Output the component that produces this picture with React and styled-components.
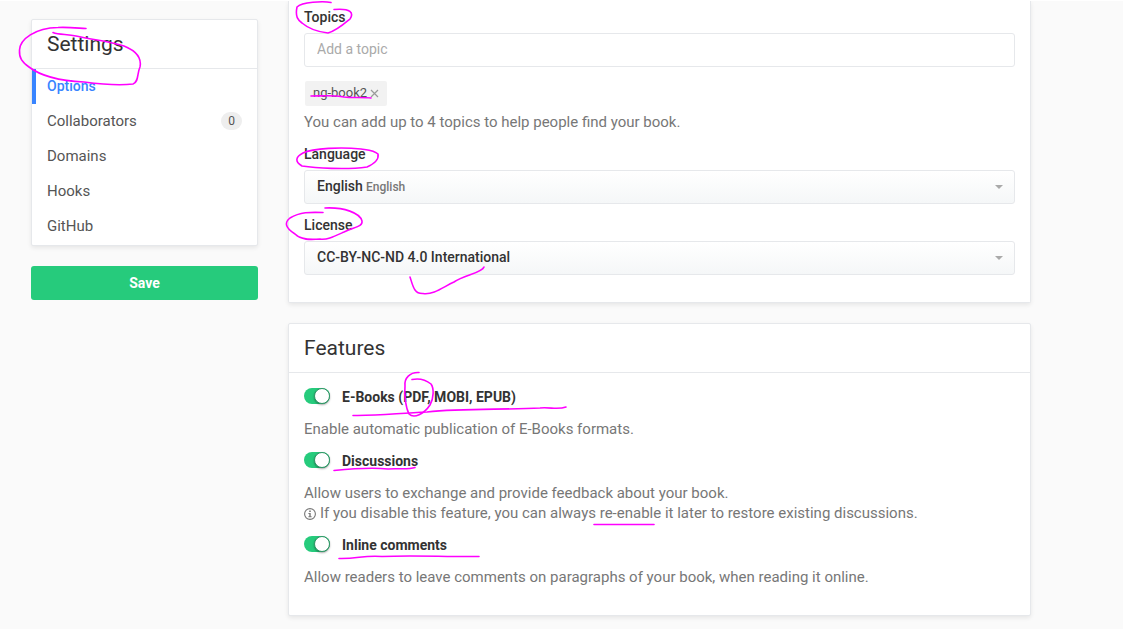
import React from "react";
import styled, { createGlobalStyle } from "styled-components";

const GlobalStyle = createGlobalStyle`
  *, *::before, *::after { box-sizing: border-box; }
  body {
    margin: 0;
    background: #fafafa;
    color: #333;
    font-family: Roboto, "Liberation Sans", sans-serif;
    font-size: 14px;
    line-height: 20px;
  }
`;

const Page = styled.div`
  position: relative;
  min-height: 100vh;
  overflow: hidden;
  border-top: 1px solid #fff;
`;

const Layout = styled.div`
  display: grid;
  grid-template-columns: 227px minmax(0, 1fr);
  gap: 30px;
  align-items: start;
  padding: 0 92px 12px 31px;
`;

const Sidebar = styled.aside`
  display: flex;
  flex-direction: column;
  gap: 20px;
  padding-top: 18px;
`;

const Main = styled.main`
  display: flex;
  flex-direction: column;
  gap: 20px;
`;

const Panel = styled.section`
  background: #fff;
  border: 1px solid #e6e8eb;
  border-top-width: ${(p) => (p.$continued ? 0 : "1px")};
  border-radius: ${(p) => (p.$continued ? "0 0 2px 2px" : "2px")};
  box-shadow: 0 2px 4px rgba(0, 0, 0, 0.08);
`;

const PanelTitle = styled.h2`
  margin: 0;
  padding: 12px 15px;
  border-bottom: 1px solid #e6e8eb;
  font-size: 21px;
  line-height: 24px;
  font-weight: 400;
`;

const PanelBody = styled.div`
  padding: ${(p) => (p.$continued ? "6px 15px 27px" : "14px 15px 28px")};
`;

const Nav = styled.nav`
  display: flex;
  flex-direction: column;
  padding-bottom: 1px;
`;

const NavLink = styled.a`
  display: flex;
  align-items: center;
  justify-content: space-between;
  height: 35px;
  padding: 0 15px 2px;
  color: ${(p) => (p.$active ? "#3884ff" : "#555")};
  font-weight: ${(p) => (p.$active ? 500 : 400)};
  font-size: ${(p) => (p.$active ? "14px" : "15px")};
  text-decoration: none;
  box-shadow: ${(p) => (p.$active ? "inset 4px 0 0 #3884ff" : "none")};
`;

const Count = styled.span`
  min-width: 21px;
  border-radius: 9px;
  background: #eee;
  color: #555;
  font-size: 12px;
  line-height: 18px;
  text-align: center;
`;

const SaveButton = styled.button`
  height: 34px;
  border: 0;
  border-radius: 3px;
  background: #26cb7c;
  color: #fff;
  font: 700 14px/20px Roboto, "Liberation Sans", sans-serif;
`;

const Field = styled.div`
  display: flex;
  flex-direction: column;
  gap: 6px;
  & + & { margin-top: 11px; }
`;

const Label = styled.label`
  font-weight: 500;
`;

const TextInput = styled.input`
  width: 100%;
  height: 34px;
  padding: 0 12px 2px;
  border: 1px solid #e6e8eb;
  border-radius: 3px;
  background: #fff;
  color: #333;
  font: 400 14px/20px Roboto, "Liberation Sans", sans-serif;
  &::placeholder { color: #aaa; opacity: 1; }
`;

const Tags = styled.div`
  display: flex;
  padding: 8px 1px 0;
`;

const Tag = styled.span`
  display: inline-flex;
  align-items: center;
  gap: 3px;
  height: 25px;
  padding: 0 8px 2px;
  border-radius: 2px;
  background: #f2f2f2;
  color: #555;
  font-size: 13px;
`;

const RemoveButton = styled.button`
  display: flex;
  padding: 2px 0 0;
  border: 0;
  background: none;
  color: #999;
`;

const Help = styled.p`
  margin: 0;
  color: #777;
  font-size: 15px;
`;

const FieldHelp = styled(Help)`
  padding-bottom: 1px;
`;

const SelectBox = styled.div`
  position: relative;
  display: grid;
`;

const Select = styled.select`
  appearance: none;
  width: 100%;
  height: 34px;
  padding: 0 30px 2px 12px;
  border: 1px solid #e6e8eb;
  border-radius: 3px;
  background: linear-gradient(#fff, #f5f7f8);
  color: #333;
  font: 500 14px/20px Roboto, "Liberation Sans", sans-serif;
`;

const NativeName = styled.span`
  position: absolute;
  left: 62px;
  top: 7px;
  color: #777;
  font-size: 12px;
  font-weight: 500;
  pointer-events: none;
`;

const Caret = styled.svg`
  position: absolute;
  right: 12px;
  top: 15px;
  pointer-events: none;
`;

const Feature = styled.div`
  display: flex;
  flex-direction: column;
  gap: 12px;
  & + & { margin-top: 12px; }
`;

const FeatureLabel = styled.label`
  display: flex;
  align-items: center;
  gap: 12px;
  font-weight: 700;
`;

const Toggle = styled.input`
  appearance: none;
  display: flex;
  align-items: center;
  justify-content: flex-end;
  width: 26px;
  height: 16px;
  margin: 0 0 2px;
  border-radius: 8px;
  background: #26cb7c;
  &::before {
    content: "";
    width: 16px;
    height: 16px;
    border: 1px solid #2e9665;
    border-radius: 50%;
    background: #fff;
    box-shadow: 0 1px 2px rgba(0, 0, 0, 0.35);
  }
`;

const InfoIcon = styled.svg`
  display: inline-block;
  vertical-align: -2px;
  margin-right: 4px;
`;

const Ink = styled.svg`
  position: absolute;
  left: 0;
  top: -1px;
  pointer-events: none;
  fill: none;
  stroke: #ff00ff;
  stroke-width: 1.6;
  stroke-linecap: round;
  stroke-linejoin: round;
`;

const links = [
  { name: "Options", active: true },
  { name: "Collaborators", count: 0 },
  { name: "Domains" },
  { name: "Hooks" },
  { name: "GitHub" },
];

const strokes = [
  "M86 28.5C77 28 68 27 58 27.5C35 28 20 39 19.5 50C19 58 22 62 29 67C42 77 63 81 84 82C99 84 118 86 133 84C139 82 137 73 140 67C142 57 134 50 124 46C109 41 94 40 76 36C67 34 59 35 53 32.5",
  "M331 2.5C323 1 302 2 297 7C295 17 298 20 302 23C309 29 319 32 328 33C336 31 344 24 350 19C354 13 351 8 334 9.5",
  "M311 96C323 96 334 95 344 97C352 98 363 97 371 98",
  "M361 149C342 147 313 148 303 153C295 157 295 162 302 166C315 168 346 170 367 167C376 163 379 159 378 154C374 150 368 150 361 149",
  "M325 208C344 207 360 213 362 221C363 227 354 227 344 232C333 237 327 240 320 239C310 240 301 240 295 234C284 227 285 222 290 218C300 212 310 212 323 212.5",
  "M410 277C413 286 414 294 423 293.5C434 295 443 287 454 282C464 275 482 273 484 267",
  "M419 372.5C410 372 404 378 405 386C404 396 406 408 409 414C414 419 424 414 430 405C434 398 434 388 431 384C426 380 419 378 412 379.5",
  "M353 415.5C381 416 398 413 427 412C463 408 502 410 540 408C550 407 558 410 566 407",
  "M334 470.5C349 469 369 467 388 469C396 468 408 470 415 467.5",
  "M594 524.5H654",
  "M339 558.5C358 559 363 555 382 556.5C413 555 447 557 479 556.5",
];

function DownCaret() {
  return (
    <Caret width="8" height="4" viewBox="0 0 8 4" aria-hidden="true">
      <path d="M0 0h8L4 4z" fill="#aaa" />
    </Caret>
  );
}

function FeatureRow({ id, title, children }) {
  return (
    <Feature>
      <FeatureLabel htmlFor={id}>
        <Toggle id={id} type="checkbox" role="switch" defaultChecked />
        {title}
      </FeatureLabel>
      <Help>{children}</Help>
    </Feature>
  );
}

export default function App() {
  return (
    <Page>
      <GlobalStyle />
      <Layout>
        <Sidebar>
          <Panel>
            <PanelTitle>Settings</PanelTitle>
            <Nav>
              {links.map((l) => (
                <NavLink key={l.name} href="#" $active={l.active}>
                  {l.name}
                  {l.count !== undefined && <Count>{l.count}</Count>}
                </NavLink>
              ))}
            </Nav>
          </Panel>
          <SaveButton type="button">Save</SaveButton>
        </Sidebar>
        <Main>
          <Panel $continued>
            <PanelBody $continued>
              <Field>
                <Label htmlFor="topics">Topics</Label>
                <TextInput id="topics" type="text" placeholder="Add a topic" />
                <Tags>
                  <Tag>
                    ng-book2
                    <RemoveButton type="button" aria-label="Remove topic">
                      <svg width="9" height="9" viewBox="0 0 9 9" aria-hidden="true">
                        <path d="M1 1l7 7M8 1L1 8" stroke="currentColor" strokeWidth="1.2" />
                      </svg>
                    </RemoveButton>
                  </Tag>
                </Tags>
                <FieldHelp>You can add up to 4 topics to help people find your book.</FieldHelp>
              </Field>
              <Field>
                <Label htmlFor="language">Language</Label>
                <SelectBox>
                  <Select id="language">
                    <option>English</option>
                  </Select>
                  <NativeName>English</NativeName>
                  <DownCaret />
                </SelectBox>
              </Field>
              <Field>
                <Label htmlFor="license">License</Label>
                <SelectBox>
                  <Select id="license">
                    <option>CC-BY-NC-ND 4.0 International</option>
                  </Select>
                  <DownCaret />
                </SelectBox>
              </Field>
            </PanelBody>
          </Panel>
          <Panel>
            <PanelTitle>Features</PanelTitle>
            <PanelBody>
              <FeatureRow id="ebooks" title="E-Books (PDF, MOBI, EPUB)">
                Enable automatic publication of E-Books formats.
              </FeatureRow>
              <FeatureRow id="discussions" title="Discussions">
                Allow users to exchange and provide feedback about your book.
                <br />
                <InfoIcon width="12" height="12" viewBox="0 0 12 12" aria-hidden="true">
                  <circle cx="6" cy="6" r="5.4" fill="none" stroke="#777" strokeWidth="1.1" />
                  <path d="M5.2 2.6h1.6v1.5H5.2zM4.4 5h2.3v3.2h.9v1H4.4v-1h.9V6h-.9z" fill="#777" />
                </InfoIcon>
                If you disable this feature, you can always re-enable it later to restore existing discussions.
              </FeatureRow>
              <FeatureRow id="inline" title="Inline comments">
                Allow readers to leave comments on paragraphs of your book, when reading it online.
              </FeatureRow>
            </PanelBody>
          </Panel>
        </Main>
      </Layout>
      <Ink width="700" height="600" viewBox="0 0 700 600" aria-hidden="true">
        {strokes.map((d) => (
          <path key={d} d={d} />
        ))}
      </Ink>
    </Page>
  );
}
